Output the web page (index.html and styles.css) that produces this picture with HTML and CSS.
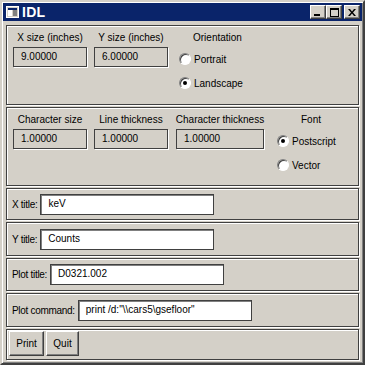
FILE: index.html
```html
<!DOCTYPE html>
<html lang="en">
<head>
    <meta charset="UTF-8">
    <title>IDL</title>
    <link rel="stylesheet" href="styles.css">
</head>
<body>

<div class="window">
    <div class="titlebar">
        <span class="app-icon">
            <svg width="13" height="12" viewBox="0 0 13 12">
                <rect x="0.5" y="0.5" width="12" height="11" fill="#d4d0c8" stroke="#fff"/>
                <rect x="2" y="2" width="4" height="8" fill="#fff"/>
                <rect x="7" y="2" width="4" height="8" fill="#808080"/>
                <rect x="2" y="2" width="9" height="2" fill="#0a246a"/>
            </svg>
        </span>
        <span class="title">IDL</span>
        <div class="caption-buttons">
            <button class="cap-btn">
                <svg width="8" height="8" viewBox="0 0 8 8"><rect x="0" y="6" width="6" height="2" fill="#000"/></svg>
            </button>
            <button class="cap-btn">
                <svg width="9" height="9" viewBox="0 0 9 9"><rect x="0.5" y="0.5" width="8" height="8" fill="none" stroke="#000"/><rect x="0" y="0" width="9" height="2" fill="#000"/></svg>
            </button>
            <button class="cap-btn close-btn">
                <svg width="8" height="7" viewBox="0 0 8 7"><path d="M0 0h2l2 2.5 2-2.5h2l-3 3.5 3 3.5h-2l-2-2.5-2 2.5h-2l3-3.5z" fill="#000"/></svg>
            </button>
        </div>
    </div>

    <div class="client">
        <div class="panel panel-size">
            <div class="field-group">
                <div class="field-label">X size (inches)</div>
                <div class="readout">9.00000</div>
            </div>
            <div class="field-group">
                <div class="field-label">Y size (inches)</div>
                <div class="readout">6.00000</div>
            </div>
            <div class="radio-group orientation">
                <div class="group-title">Orientation</div>
                <div class="radio"><span class="radio-box"></span>Portrait</div>
                <div class="radio"><span class="radio-box checked"></span>Landscape</div>
            </div>
        </div>

        <div class="panel panel-chars">
            <div class="field-group">
                <div class="field-label">Character size</div>
                <div class="readout">1.00000</div>
            </div>
            <div class="field-group">
                <div class="field-label">Line thickness</div>
                <div class="readout">1.00000</div>
            </div>
            <div class="field-group wide">
                <div class="field-label">Character thickness</div>
                <div class="readout">1.00000</div>
            </div>
            <div class="radio-group font">
                <div class="group-title">Font</div>
                <div class="radio"><span class="radio-box checked"></span>Postscript</div>
                <div class="radio"><span class="radio-box"></span>Vector</div>
            </div>
        </div>

        <div class="panel row-panel p-xtitle">
            <span class="row-label">X title:</span>
            <div class="text-input">keV</div>
        </div>

        <div class="panel row-panel p-ytitle">
            <span class="row-label">Y title:</span>
            <div class="text-input">Counts</div>
        </div>

        <div class="panel row-panel p-ptitle">
            <span class="row-label">Plot title:</span>
            <div class="text-input">D0321.002</div>
        </div>

        <div class="panel row-panel p-command">
            <span class="row-label">Plot command:</span>
            <div class="text-input">print /d:"\\cars5\gsefloor"</div>
        </div>

        <div class="panel button-panel">
            <button class="push-btn print-btn">Print</button>
            <button class="push-btn quit-btn">Quit</button>
        </div>
    </div>
</div>

</body>
</html>
```

FILE: styles.css
```css
* {
    margin: 0;
    padding: 0;
    box-sizing: border-box;
}
body {
    width: 365px;
    height: 365px;
    background: #d4d0c8;
    font-family: "Liberation Sans", Arial, sans-serif;
    font-size: 10px;
    color: #000;
    overflow: hidden;
}

/* window frame */
.window {
    width: 365px;
    height: 365px;
    background: #d4d0c8;
    border: 2px solid;
    border-color: #d4d0c8 #404040 #404040 #d4d0c8;
    box-shadow: inset 1px 1px 0 #fff, inset -1px -1px 0 #808080;
    padding: 1px;
    display: flex;
    flex-direction: column;
}
.titlebar {
    height: 18px;
    background: #0a246a;
    display: flex;
    align-items: center;
    padding: 0 2px 0 3px;
    color: #fff;
}
.app-icon {
    display: flex;
    width: 13px;
    height: 12px;
}
.title {
    font-size: 14px;
    font-weight: bold;
    margin-left: 3px;
    letter-spacing: 0.3px;
}
.caption-buttons {
    margin-left: auto;
    display: flex;
}
.cap-btn {
    width: 16px;
    height: 14px;
    background: #d4d0c8;
    border: 1px solid;
    border-color: #fff #404040 #404040 #fff;
    box-shadow: inset -1px -1px 0 #808080;
    display: flex;
    align-items: center;
    justify-content: center;
}
.close-btn {
    margin-left: 2px;
}

/* client area */
.client {
    flex: 1;
    padding: 4px 3px 2px 3px;
    display: flex;
    flex-direction: column;
    gap: 2px;
}
.panel {
    border: 1px solid #404040;
    box-shadow: inset 1px 1px 0 #fff, 1px 1px 0 #fff;
}
.panel-size {
    height: 80px;
    display: flex;
    padding: 6px 0 0 6px;
}
.panel-chars {
    height: 79px;
    display: flex;
    padding: 6px 0 0 6px;
}
.field-group {
    width: 74px;
    margin-right: 7px;
    display: flex;
    flex-direction: column;
    align-items: center;
}
.field-group.wide {
    width: 88px;
    margin-left: 1px;
}
.field-label {
    line-height: 12px;
    white-space: nowrap;
}
.readout {
    width: 100%;
    height: 20px;
    margin-top: 3px;
    border: 1px solid #404040;
    box-shadow: 1px 1px 0 #fff;
    padding: 0 0 0 7px;
    line-height: 17px;
}

/* radios */
.radio-group {
    display: flex;
    flex-direction: column;
}
.orientation {
    margin-left: 4px;
}
.font {
    margin-left: 6px;
}
.group-title {
    line-height: 12px;
    margin-bottom: 3px;
}
.orientation .group-title {
    padding-left: 14px;
}
.font .group-title {
    padding-left: 24px;
}
.radio {
    height: 24px;
    display: flex;
    align-items: center;
    white-space: nowrap;
}
.radio-box {
    width: 12px;
    height: 12px;
    border-radius: 50%;
    background: #fff;
    border: 1px solid;
    border-color: #808080 #fff #fff #808080;
    box-shadow: inset 1px 1px 0 #404040;
    margin-right: 3px;
    position: relative;
}
.radio-box.checked::after {
    content: "";
    position: absolute;
    left: 3px;
    top: 3px;
    width: 4px;
    height: 4px;
    border-radius: 50%;
    background: #000;
}

/* text rows */
.row-panel {
    display: flex;
    align-items: center;
    padding-left: 5px;
}
.p-xtitle { height: 32px; }
.p-ytitle { height: 34px; }
.p-ptitle { height: 33px; }
.p-command { height: 34px; }
.row-label {
    white-space: nowrap;
    margin-right: 3px;
    letter-spacing: -0.3px;
}
.text-input {
    width: 174px;
    height: 21px;
    background: #fff;
    border: 1px solid #404040;
    box-shadow: inset 1px 1px 0 #808080;
    padding-left: 7px;
    line-height: 17px;
    white-space: nowrap;
}

/* buttons */
.button-panel {
    height: 31px;
    display: flex;
    gap: 2px;
    padding: 1px 0 0 2px;
}
.push-btn {
    height: 25px;
    background: #d4d0c8;
    border: 1px solid;
    border-color: #fff #404040 #404040 #fff;
    box-shadow: inset -1px -1px 0 #808080;
    font-family: "Liberation Sans", Arial, sans-serif;
    font-size: 10px;
    color: #000;
}
.print-btn { width: 35px; }
.quit-btn { width: 33px; }
```
